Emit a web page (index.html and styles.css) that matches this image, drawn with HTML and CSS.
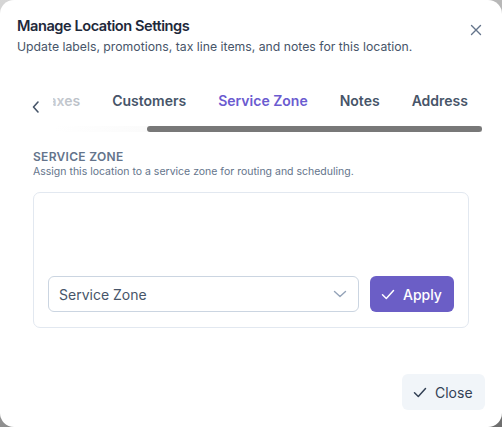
FILE: index.html
```html
<!DOCTYPE html>
<html lang="en">
<head>
<meta charset="utf-8">
<title>Manage Location Settings</title>
<link rel="stylesheet" href="styles.css">
</head>
<body>
<div class="dialog">
  <header class="header">
    <div class="titles">
      <h1 class="title">Manage Location Settings</h1>
      <p class="subtitle">Update labels, promotions, tax line items, and notes for this location.</p>
    </div>
    <button class="icon-btn close-x" aria-label="Close">
      <svg width="12" height="12" viewBox="0 0 12 12"><path d="M1.5 1.5l9 9M10.5 1.5l-9 9" stroke="#64748b" stroke-width="1.4" stroke-linecap="round" fill="none"/></svg>
    </button>
  </header>

  <div class="tabbar">
    <button class="icon-btn chevron" aria-label="Scroll left">
      <svg width="10" height="14" viewBox="0 0 10 14"><path d="M7 2L2.5 7 7 12" stroke="#475569" stroke-width="1.6" stroke-linecap="round" stroke-linejoin="round" fill="none"/></svg>
    </button>
    <div class="tab-viewport">
      <div class="tabs">
        <span class="tab">Taxes</span>
        <span class="tab">Customers</span>
        <span class="tab active">Service Zone</span>
        <span class="tab">Notes</span>
        <span class="tab">Address</span>
      </div>
      <div class="scrollbar"><div class="thumb"></div></div>
      <div class="fade"></div>
    </div>
  </div>

  <section class="section">
    <h2 class="section-title">SERVICE ZONE</h2>
    <p class="section-desc">Assign this location to a service zone for routing and scheduling.</p>
    <div class="card">
      <div class="controls">
        <div class="select">
          <span>Service Zone</span>
          <svg width="14" height="8" viewBox="0 0 14 8"><path d="M1.5 1.5L7 6.5l5.5-5" stroke="#94a3b8" stroke-width="1.4" stroke-linecap="round" stroke-linejoin="round" fill="none"/></svg>
        </div>
        <button class="btn primary">
          <svg width="14" height="11" viewBox="0 0 14 11"><path d="M1.5 5.8l3.8 3.7L12.5 1.5" stroke="#ffffff" stroke-width="1.5" stroke-linecap="round" stroke-linejoin="round" fill="none"/></svg>
          Apply
        </button>
      </div>
    </div>
  </section>

  <footer class="footer">
    <button class="btn secondary">
      <svg width="14" height="11" viewBox="0 0 14 11"><path d="M1.5 5.8l3.8 3.7L12.5 1.5" stroke="#334155" stroke-width="1.5" stroke-linecap="round" stroke-linejoin="round" fill="none"/></svg>
      Close
    </button>
  </footer>
</div>
</body>
</html>
```

FILE: styles.css
```css
* { box-sizing: border-box; }
html, body { margin: 0; padding: 0; }
body {
  width: 502px;
  height: 427px;
  overflow: hidden;
  background: linear-gradient(160deg, #d6d6d6 0%, #9a9a9a 60%, #6e6e6e 100%);
  font-family: Inter, "Noto Sans", "Liberation Sans", sans-serif;
}
.dialog {
  width: 502px;
  height: 427px;
  background: #ffffff;
  border-radius: 14px;
  display: flex;
  flex-direction: column;
}
.header {
  display: flex;
  justify-content: space-between;
  align-items: flex-start;
  padding: 16px 18px 0 17px;
}
.title {
  margin: 0;
  font-size: 14.6px;
  line-height: 20px;
  font-weight: 600;
  letter-spacing: -0.45px;
  color: #1e293b;
}
.subtitle {
  margin: 2px 0 0;
  font-size: 12.25px;
  line-height: 18px;
  color: #475569;
}
.icon-btn {
  border: 0;
  background: transparent;
  padding: 0;
  display: flex;
  align-items: center;
  justify-content: center;
}
.close-x {
  width: 20px;
  height: 20px;
  margin-top: 4px;
  margin-right: -2px;
}
.tabbar {
  display: flex;
  margin-top: 27px;
  padding-left: 18px;
  padding-right: 20px;
}
.chevron {
  width: 35px;
  height: 43px;
  padding-top: 5px;
}
.tab-viewport {
  position: relative;
  flex: 1;
  min-width: 0;
  overflow: hidden;
}
.tabs {
  display: flex;
  justify-content: flex-end;
  height: 43px;
  margin-right: -2px;
}
.tab {
  flex-shrink: 0;
  padding: 8px 16px 15px;
  font-size: 14px;
  line-height: 20px;
  font-weight: 600;
  color: #475569;
  white-space: nowrap;
}
.tab.active { color: #6b5bd0; }
.scrollbar {
  height: 6px;
  display: flex;
  justify-content: flex-end;
  background: linear-gradient(90deg, #ffffff 0%, #ececec 100%);
}
.thumb {
  width: 335px;
  height: 6px;
  border-radius: 3px;
  background: #787878;
}
.fade {
  position: absolute;
  left: 0;
  top: 0;
  width: 48px;
  height: 43px;
  background: linear-gradient(90deg, rgba(255,255,255,0.7) 0%, rgba(255,255,255,0.6) 75%, rgba(255,255,255,0) 100%);
}
.section {
  padding: 17px 33px 0;
}
.section-title {
  margin: 0;
  font-size: 12px;
  line-height: 16px;
  font-weight: 600;
  letter-spacing: 0.3px;
  color: #64748b;
}
.section-desc {
  margin: 0;
  font-size: 10.5px;
  line-height: 14px;
  color: #64748b;
}
.card {
  margin-top: 13px;
  height: 136px;
  border: 1px solid #e2e8f0;
  border-radius: 7px;
  padding: 0 14px 15px;
  display: flex;
  flex-direction: column;
  justify-content: flex-end;
}
.controls {
  display: flex;
  gap: 11px;
}
.select {
  flex: 1;
  height: 36px;
  border: 1px solid #cbd5e1;
  border-radius: 6px;
  display: flex;
  align-items: center;
  justify-content: space-between;
  padding: 0 11px 0 10px;
  font-size: 14px;
  color: #475569;
}
.btn {
  height: 36px;
  border: 0;
  border-radius: 6px;
  display: flex;
  align-items: center;
  gap: 8px;
  font-family: inherit;
  font-size: 14px;
}
.primary {
  width: 84px;
  padding: 0 0 0 11px;
  background: #6b5ec6;
  color: #ffffff;
  font-weight: 500;
}
.footer {
  margin-top: auto;
  display: flex;
  justify-content: flex-end;
  padding: 0 17px 17px;
}
.secondary {
  width: 83px;
  padding: 0 0 0 11px;
  background: #f1f5f9;
  color: #334155;
}
```
